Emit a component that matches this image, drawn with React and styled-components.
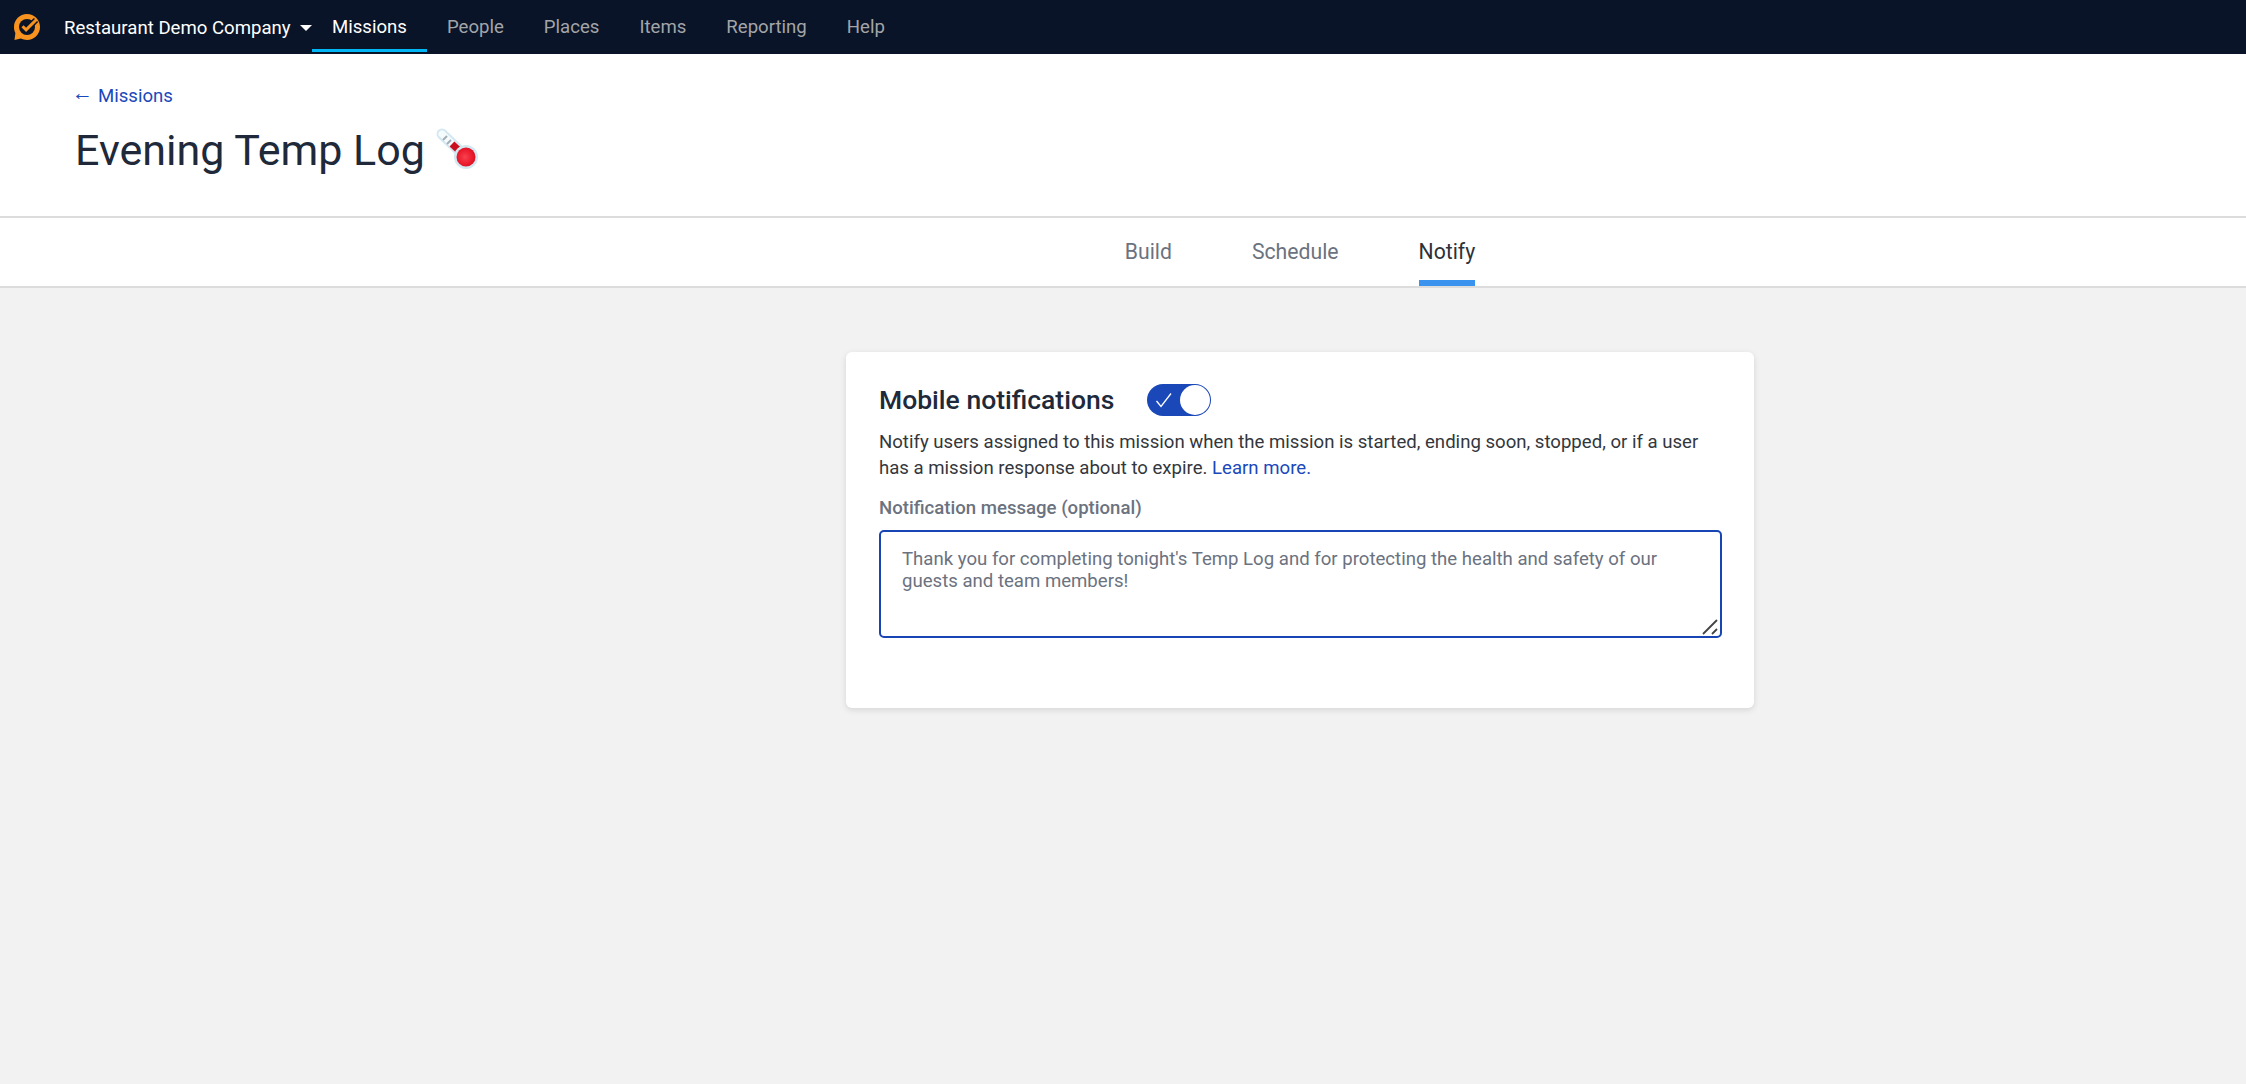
import React from "react";
import styled, { createGlobalStyle } from "styled-components";

const GlobalStyle = createGlobalStyle`
  html, body {
    margin: 0;
    padding: 0;
    height: 100%;
    background: #f2f2f2;
    font-family: Roboto, "Liberation Sans", sans-serif;
  }
  #root {
    min-height: 100%;
  }
  * {
    box-sizing: border-box;
  }
`;

const navItems = ["Missions", "People", "Places", "Items", "Reporting", "Help"];
const tabs = ["Build", "Schedule", "Notify"];

function Logo() {
  return (
    <svg width="28" height="28" viewBox="0 0 28 28">
      <path
        d="M14 1C6.800 1 1 6.800 1 14c0 2.200.5 4.300 1.400 6.100L1.500 27l6.300-1.400C9.700 26.500 11.800 27 14 27c7.200 0 13-5.800 13-13S21.200 1 14 1z"
        fill="#f7931e"
      />
      <circle cx="14" cy="14" r="8" fill="#0a1428" />
      <path d="M9.500 13.200l3.600 3.700 9.900-9.900" fill="none" stroke="#0a1428" strokeWidth="6" />
      <path d="M9.500 13.200l3.600 3.700 10.400-10.400" fill="none" stroke="#f7931e" strokeWidth="3" />
    </svg>
  );
}

function Thermometer() {
  return (
    <svg width="44" height="44" viewBox="0 0 44 44">
      <defs>
        <radialGradient id="bulb" cx="0.45" cy="0.5" r="0.6">
          <stop offset="0" stopColor="#f9404e" />
          <stop offset="0.7" stopColor="#e8182a" />
          <stop offset="1" stopColor="#d0101e" />
        </radialGradient>
      </defs>
      <path d="M6 6L29 28" stroke="#d3e8f1" strokeWidth="11" strokeLinecap="round" />
      <path d="M6 6L29 28" stroke="#f6fbfd" strokeWidth="7" strokeLinecap="round" />
      <path d="M7 12l4-4M11 16l4-4M15 19l3-3" stroke="#a3afb6" strokeWidth="2" />
      <path d="M16 16L30 29" stroke="#c8101e" strokeWidth="7" />
      <circle cx="30" cy="29" r="12" fill="#d3e8f1" />
      <circle cx="30" cy="29" r="9.500" fill="url(#bulb)" />
    </svg>
  );
}

function App() {
  return (
    <>
      <GlobalStyle />
      <Page>
        <Nav>
          <LogoWrap>
            <Logo />
          </LogoWrap>
          <Company>
            Restaurant Demo Company
            <Caret />
          </Company>
          {navItems.map((item, i) => (
            <NavItem key={item} $active={i === 0}>
              {item}
            </NavItem>
          ))}
        </Nav>

        <Header>
          <BackLink>
            <BackArrow>←</BackArrow> Missions
          </BackLink>
          <Title>
            Evening Temp Log
            <Thermometer />
          </Title>
        </Header>

        <TabBar>
          {tabs.map((tab) => (
            <Tab key={tab} $active={tab === "Notify"}>
              {tab}
            </Tab>
          ))}
        </TabBar>

        <Content>
          <Card>
            <CardHeading>
              <CardTitle>Mobile notifications</CardTitle>
              <Toggle>
                <svg width="18" height="16" viewBox="0 0 18 16">
                  <path d="M1.500 9l4.500 5.500L16 1.500" fill="none" stroke="#fff" strokeWidth="1.300" />
                </svg>
                <Knob />
              </Toggle>
            </CardHeading>
            <Description>
              Notify users assigned to this mission when the mission is started, ending soon,
              stopped, or if a user has a mission response about to expire.{" "}
              <LearnMore>Learn more.</LearnMore>
            </Description>
            <FieldLabel>Notification message (optional)</FieldLabel>
            <MessageWrap>
              <MessageInput placeholder="Thank you for completing tonight's Temp Log and for protecting the health and safety of our guests and team members!" />
              <ResizeHandle width="16" height="16" viewBox="0 0 16 16">
                <path d="M1 15L15 1M10 15l5-5" stroke="#444" strokeWidth="1.800" />
              </ResizeHandle>
            </MessageWrap>
          </Card>
        </Content>
      </Page>
    </>
  );
}

export default App;

const Page = styled.div`
  display: flex;
  flex-direction: column;
  min-height: 100vh;
  background: #f2f2f2;
`;

const Nav = styled.div`
  display: flex;
  align-items: stretch;
  height: 54px;
  background: #0a1428;
`;

const LogoWrap = styled.div`
  display: flex;
  align-items: center;
  padding-left: 13px;
  width: 64px;
`;

const Company = styled.div`
  display: flex;
  align-items: center;
  gap: 9px;
  padding-top: 1px;
  color: #fff;
  font-size: 18.6px;
  width: 248px;
`;

const Caret = styled.span`
  width: 0;
  height: 0;
  border-left: 6px solid transparent;
  border-right: 6px solid transparent;
  border-top: 6px solid #fff;
`;

const NavItem = styled.div`
  display: flex;
  align-items: center;
  padding: 5px 20px 0;
  height: 52px;
  font-size: 18.6px;
  color: ${(p) => (p.$active ? "#fff" : "#a3a5a9")};
  border-bottom: 3px solid ${(p) => (p.$active ? "#00b6f5" : "transparent")};
`;

const Header = styled.div`
  height: 162px;
  padding: 30px 75px 0;
  background: #fff;
`;

const BackLink = styled.div`
  display: flex;
  align-items: center;
  gap: 5px;
  font-size: 18.6px;
  line-height: 24px;
  color: #1b48bb;
`;

const BackArrow = styled.span`
  margin: -6px 0 0 -3px;
  font-size: 21px;
  font-family: "Liberation Sans", sans-serif;
  line-height: 24px;
`;

const Title = styled.h1`
  display: flex;
  align-items: center;
  gap: 11px;
  margin: 12px 0 0;
  font-size: 43px;
  font-weight: 400;
  line-height: 60px;
  color: #20293a;
`;

const TabBar = styled.div`
  display: flex;
  justify-content: center;
  gap: 80px;
  height: 72px;
  padding-left: 354px;
  background: #fff;
  border-top: 2px solid #dcdcdc;
  border-bottom: 2px solid #dcdcdc;
`;

const Tab = styled.div`
  display: flex;
  align-items: center;
  height: 68px;
  padding-top: 4px;
  font-size: 21.2px;
  color: ${(p) => (p.$active ? "#2d3138" : "#6b7280")};
  border-bottom: 6px solid ${(p) => (p.$active ? "#3b93f0" : "transparent")};
`;

const Content = styled.div`
  flex: 1;
  display: flex;
  justify-content: center;
  padding: 64px 0 0 354px;
`;

const Card = styled.div`
  width: 908px;
  height: 356px;
  padding: 32px 33px;
  background: #fff;
  border-radius: 6px;
  box-shadow: 0 2px 6px rgba(0, 0, 0, 0.12);
`;

const CardHeading = styled.div`
  display: flex;
  align-items: center;
  gap: 33px;
`;

const CardTitle = styled.h2`
  margin: 0;
  font-size: 26.5px;
  font-weight: 500;
  line-height: 32px;
  color: #20293a;
`;

const Toggle = styled.div`
  display: flex;
  align-items: center;
  justify-content: space-between;
  width: 64px;
  height: 32px;
  padding: 1px 1px 1px 8px;
  border-radius: 16px;
  background: #1b48b8;
`;

const Knob = styled.span`
  width: 30px;
  height: 30px;
  border-radius: 50%;
  background: #fff;
`;

const Description = styled.p`
  margin: 13px 0 0;
  font-size: 18.6px;
  line-height: 26px;
  color: #33373d;
`;

const LearnMore = styled.a`
  color: #1b48bb;
`;

const FieldLabel = styled.div`
  margin-top: 14px;
  font-size: 18.6px;
  font-weight: 500;
  line-height: 26px;
  color: #6b7280;
`;

const MessageWrap = styled.div`
  position: relative;
  width: 843px;
  height: 108px;
  margin-top: 9px;
`;

const MessageInput = styled.textarea`
  display: block;
  width: 100%;
  height: 100%;
  padding: 16px 21px;
  border: 2px solid #1745b3;
  border-radius: 5px;
  outline: none;
  resize: none;
  background: #fff;
  font-family: Roboto, "Liberation Sans", sans-serif;
  font-size: 18.6px;
  line-height: 22px;
  color: #33373d;
  &::placeholder {
    color: #6b7280;
    opacity: 1;
  }
`;

const ResizeHandle = styled.svg`
  position: absolute;
  right: 4px;
  bottom: 3px;
`;
